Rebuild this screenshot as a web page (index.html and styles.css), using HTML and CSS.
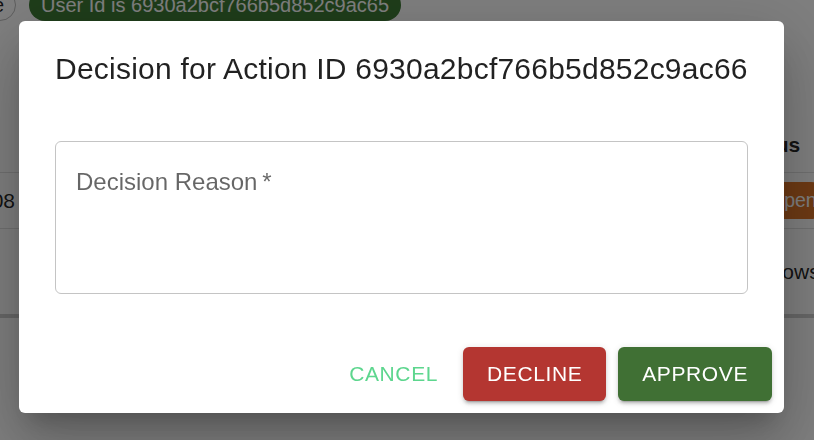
FILE: index.html
```html
<!DOCTYPE html>
<html lang="en">
<head>
<meta charset="utf-8">
<title>Decision</title>
<link rel="stylesheet" href="styles.css">
</head>
<body>
<div class="page">
  <div class="topbar">
    <span class="chip chip-outline"><span class="chip-label">Role</span></span>
    <span class="chip chip-green">User Id is 6930a2bcf766b5d852c9ac65</span>
  </div>
  <div class="table">
    <div class="trow thead">
      <div class="cell cell-left"></div>
      <div class="cell cell-right"><span class="th">Status</span></div>
    </div>
    <div class="trow row1">
      <div class="cell cell-left">2025-12-08</div>
      <div class="cell cell-right"><span class="status-chip">Open</span></div>
    </div>
    <div class="trow row2">
      <div class="cell cell-left"></div>
      <div class="cell cell-right"><span class="plain">Allows</span></div>
    </div>
    <div class="tfoot"></div>
  </div>
</div>

<div class="backdrop"></div>

<div class="dialog" role="dialog">
  <h2 class="dialog-title">Decision for Action ID 6930a2bcf766b5d852c9ac66</h2>
  <div class="dialog-content">
    <div class="field">
      <label class="field-label">Decision Reason<span class="req">&thinsp;*</span></label>
    </div>
  </div>
  <div class="dialog-actions">
    <button class="btn btn-text">Cancel</button>
    <button class="btn btn-decline">Decline</button>
    <button class="btn btn-approve">Approve</button>
  </div>
</div>
</body>
</html>
```

FILE: styles.css
```css
* { box-sizing: border-box; }

html, body {
  margin: 0;
  padding: 0;
  width: 814px;
  height: 440px;
  overflow: hidden;
  background: #ffffff;
  font-family: "Liberation Sans", Arial, Helvetica, sans-serif;
  color: rgba(0, 0, 0, 0.87);
}

.page {
  width: 814px;
  height: 440px;
  overflow: hidden;
}

.topbar {
  display: flex;
  align-items: center;
  gap: 13px;
  margin-top: -11px;
  height: 32px;
}

.chip {
  display: inline-flex;
  align-items: center;
  height: 32px;
  border-radius: 16px;
  font-size: 19.5px;
  white-space: nowrap;
}

.chip-outline {
  width: 100px;
  margin-left: -84px;
  justify-content: flex-end;
  border: 1.5px solid #bdbdbd;
  padding-right: 11px;
}

.chip-green {
  background: #3e7b35;
  color: #ffffff;
  padding: 0 12px;
  font-size: 20px;
}

.table {
  margin-top: 97px;
}

.trow {
  display: flex;
  justify-content: space-between;
  align-items: center;
  border-bottom: 1.5px solid #e0e0e0;
}

.thead { height: 55px; }
.row1 { height: 56px; }
.row2 { height: 85px; border-bottom: none; }

.tfoot {
  height: 4px;
  background: #cfcfcf;
}

.cell {
  font-size: 21px;
  white-space: nowrap;
}

.cell-left {
  width: 200px;
  margin-left: -185px;
  text-align: right;
}

.cell-right {
  width: 100px;
  margin-right: -22px;
  display: flex;
  align-items: center;
}

.th {
  font-weight: 700;
  font-size: 21px;
}

.status-chip {
  display: inline-flex;
  align-items: center;
  height: 37px;
  padding: 0 12px;
  margin-left: 21px;
  background: #dc7428;
  color: #ffffff;
  border-radius: 18px;
  font-size: 19.5px;
}

.plain {
  margin-left: 23px;
}

.backdrop {
  position: fixed;
  inset: 0;
  background: rgba(0, 0, 0, 0.5);
}

.dialog {
  position: fixed;
  left: 19px;
  top: 21px;
  width: 765px;
  background: #ffffff;
  border-radius: 6px;
  display: flex;
  flex-direction: column;
  box-shadow:
    0px 16px 22px -10px rgba(0, 0, 0, 0.2),
    0px 36px 57px 4px rgba(0, 0, 0, 0.14),
    0px 13px 69px 12px rgba(0, 0, 0, 0.12);
}

.dialog-title {
  margin: 0;
  padding: 24px 36px 0;
  font-size: 30px;
  line-height: 48px;
  font-weight: 400;
  letter-spacing: 0.0075em;
  color: rgba(0, 0, 0, 0.87);
  white-space: nowrap;
}

.dialog-content {
  padding: 0 36px 30px;
}

.field {
  margin-top: 48px;
  margin-bottom: 11px;
  height: 153px;
  border: 1px solid #c4c4c4;
  border-radius: 6px;
  padding: 23px 20px;
}

.field-label {
  display: block;
  font-size: 24px;
  line-height: 34.5px;
  color: rgba(0, 0, 0, 0.6);
}

.dialog-actions {
  display: flex;
  justify-content: flex-end;
  align-items: center;
  gap: 12px;
  padding: 12px;
}

.btn {
  font-family: "Liberation Sans", Arial, Helvetica, sans-serif;
  font-size: 21px;
  line-height: 36px;
  letter-spacing: 0.02857em;
  text-transform: uppercase;
  border: none;
  border-radius: 6px;
  cursor: pointer;
  padding: 9px 24px;
}

.btn-text {
  background: transparent;
  color: #5dd68e;
  padding: 9px 12px;
  margin-right: 1px;
}

.btn-decline {
  background: #b43631;
  color: #ffffff;
  box-shadow:
    0px 4px 1.5px -3px rgba(0, 0, 0, 0.2),
    0px 3px 3px 0px rgba(0, 0, 0, 0.14),
    0px 1.5px 7.5px 0px rgba(0, 0, 0, 0.12);
}

.btn-approve {
  background: #407034;
  color: #ffffff;
  box-shadow:
    0px 4px 1.5px -3px rgba(0, 0, 0, 0.2),
    0px 3px 3px 0px rgba(0, 0, 0, 0.14),
    0px 1.5px 7.5px 0px rgba(0, 0, 0, 0.12);
}
```
